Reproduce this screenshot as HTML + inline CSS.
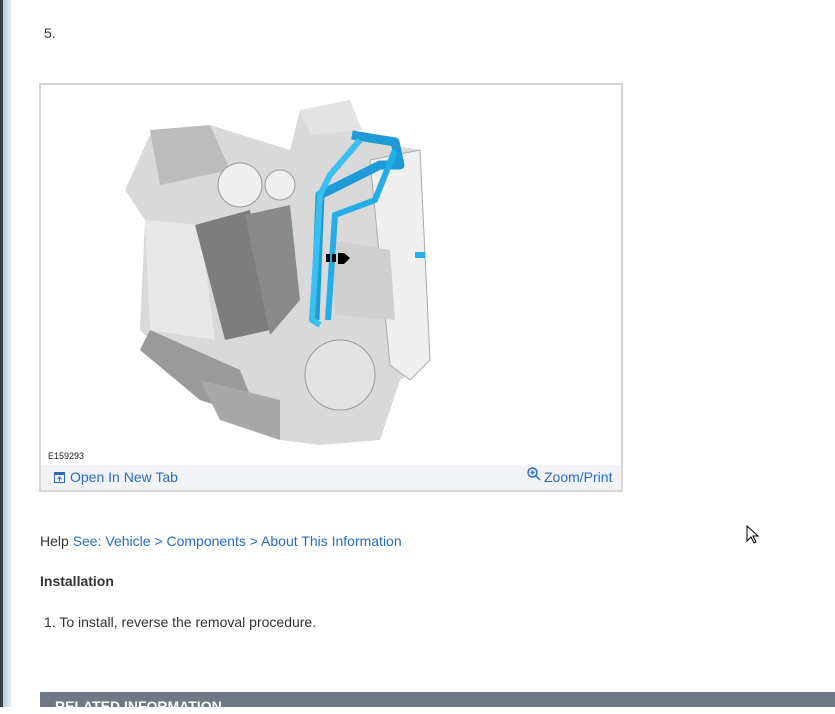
<!DOCTYPE html>
<html><head><meta charset="utf-8"><style>
html,body{margin:0;padding:0;width:835px;height:707px;overflow:hidden;background:#fff;font-family:"Liberation Sans",sans-serif;}
.lb{position:absolute;left:0;top:0;width:3px;height:707px;background:#3a3f48;}
.lb2{position:absolute;left:3px;top:0;width:8px;height:707px;background:linear-gradient(90deg,#b9cde2,#e6eef6);}
.t{position:absolute;font-size:14px;color:#333;white-space:nowrap;}
a{color:#2a6cc0;text-decoration:none;}
.box{position:absolute;left:39px;top:83px;width:580px;height:405px;border:2px solid #d6d6d6;background:#fff;}
.foot{position:absolute;left:0;bottom:0;width:580px;height:25px;background:#f1f3f6;}
.bar{position:absolute;left:40px;top:692px;width:795px;height:15px;background:#6f7884;color:#fff;font-weight:bold;font-size:14px;}
</style></head><body>
<div class="lb"></div><div class="lb2"></div>
<div class="t" style="left:44px;top:25px;">5.</div>
<div class="box">
<svg width="580" height="380" style="position:absolute;left:0;top:0">
<g transform="translate(-41,-85)">
<polygon points="150,135 210,125 290,150 300,110 350,100 360,140 420,150 430,360 400,380 380,440 320,445 280,440 220,410 140,330 145,220 125,190" fill="#d9d9d9"/>
<polygon points="145,220 200,225 215,340 150,330" fill="#e8e8e8"/>
<polygon points="195,225 250,210 270,330 225,340" fill="#7d7d7d"/>
<polygon points="245,215 290,205 300,300 270,335" fill="#8a8a8a"/>
<polygon points="150,330 240,370 260,420 200,400 140,350" fill="#9a9a9a"/>
<polygon points="200,380 280,400 280,440 220,420" fill="#a8a8a8"/>
<polygon points="150,130 210,125 230,170 160,185" fill="#bcbcbc"/>
<circle cx="240" cy="185" r="22" fill="#efefef" stroke="#999"/>
<circle cx="280" cy="185" r="15" fill="#eee" stroke="#999"/>
<polygon points="300,110 350,100 362,130 310,135" fill="#e3e3e3"/>
<polygon points="370,160 420,150 430,360 410,380 390,365" fill="#efefef" stroke="#aaa"/>
<circle cx="340" cy="375" r="35" fill="#e2e2e2" stroke="#999"/>
<polygon points="330,240 390,250 395,320 335,315" fill="#cfcfcf"/>
<polyline points="352,135 395,142 400,165 380,165 320,195 315,320" fill="none" stroke="#1e9ad6" stroke-width="9" stroke-linejoin="round"/>
<polyline points="360,140 330,175 320,195 312,320 320,325" fill="none" stroke="#39c0f0" stroke-width="6" stroke-linejoin="round"/>
<polyline points="395,150 375,200 335,215 328,320" fill="none" stroke="#25aee6" stroke-width="6"/>
<line x1="415" y1="255" x2="425" y2="255" stroke="#2aaee6" stroke-width="6"/>
<rect x="326" y="254" width="4" height="8" fill="#000"/><rect x="332" y="254" width="4" height="8" fill="#000"/>
<polygon points="338,253 344,253 350,258 344,264 338,264" fill="#000"/>
</g>
</svg>
<div style="position:absolute;left:7px;top:366px;font-size:9px;color:#222;">E159293</div>
<div class="foot">
<svg width="11" height="11" style="position:absolute;left:13px;top:7px"><rect x="0.5" y="0.5" width="10" height="10" fill="none" stroke="#2a6cc0"/><rect x="0.5" y="0.5" width="10" height="2.5" fill="#2a6cc0"/><path d="M5.5 9V5M3.5 7l2-2 2 2" stroke="#2a6cc0" fill="none"/></svg>
<a style="position:absolute;left:29px;top:4px;font-size:14px;">Open In New Tab</a>
<svg width="14" height="14" style="position:absolute;left:486px;top:2px"><circle cx="5.5" cy="5.5" r="4.5" fill="none" stroke="#2a6cc0" stroke-width="1.5"/><path d="M9 9l4 4M3.5 5.5h4M5.5 3.5v4" stroke="#2a6cc0" stroke-width="1.5"/></svg>
<a style="position:absolute;left:503px;top:4px;font-size:14px;">Zoom/Print</a>
</div>
</div>
<div class="t" style="left:40px;top:533px;">Help <a>See: Vehicle &gt; Components &gt; About This Information</a></div>
<div class="t" style="left:40px;top:573px;font-weight:bold;">Installation</div>
<div class="t" style="left:44px;top:614px;">1. To install, reverse the removal procedure.</div>
<div class="bar"><span style="position:absolute;left:15px;top:6px;">RELATED INFORMATION</span></div>
<svg width="14" height="20" style="position:absolute;left:746px;top:525px"><path d="M1 1v15l4-4 3 6 2-1-3-6h5z" fill="#fff" stroke="#000"/></svg>
</body></html>
